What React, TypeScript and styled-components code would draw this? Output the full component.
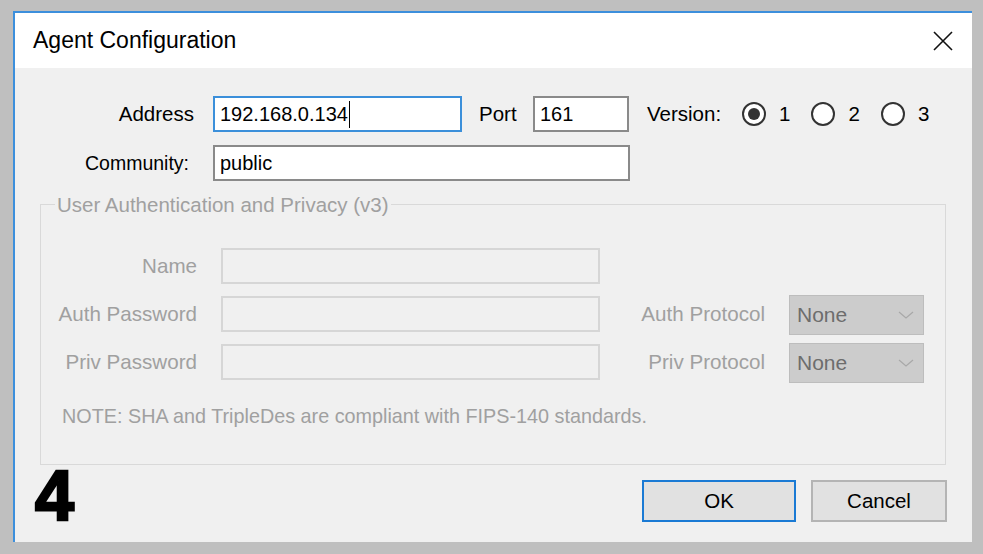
import React from 'react';
import styled, { createGlobalStyle } from 'styled-components';

const GlobalStyle = createGlobalStyle`
  html, body {
    margin: 0;
    padding: 0;
    background: #bfbfbf;
  }
  body {
    font-family: 'Liberation Sans', Arial, sans-serif;
  }
`;

const Screen = styled.div`
  width: 983px;
  height: 554px;
  box-sizing: border-box;
  padding: 11px 11px 14px 13px;
  background: #bfbfbf;
`;

const Window = styled.div`
  height: 100%;
  display: flex;
  flex-direction: column;
  border-top: 2px solid #3c8fdc;
  border-left: 2px solid #3c8fdc;
  background: #f0f0f0;
`;

const TitleBar = styled.div`
  height: 55px;
  flex: none;
  background: #ffffff;
  display: flex;
  align-items: center;
  justify-content: space-between;
  padding: 0 19px 0 18px;
  font-size: 23px;
  color: #000;
`;

const Body = styled.div`
  flex: 1;
  display: flex;
  flex-direction: column;
  padding-top: 28px;
  font-size: 20.5px;
  color: #000;
`;

const Row = styled.div`
  display: flex;
  align-items: center;
  height: 36px;
  & + & {
    margin-top: 13px;
  }
`;

const Label = styled.span<{ $width: number; $pad?: number; $align?: string; $size?: number }>`
  box-sizing: border-box;
  width: ${(p) => p.$width}px;
  flex: none;
  padding-right: ${(p) => (p.$align === 'left' ? 0 : p.$pad || 0)}px;
  padding-left: ${(p) => (p.$align === 'left' ? p.$pad || 0 : 0)}px;
  text-align: ${(p) => p.$align || 'right'};
  font-size: ${(p) => p.$size || 20.5}px;
  white-space: nowrap;
`;

const TextBox = styled.div<{ $width?: number; $focused?: boolean; $disabled?: boolean; $gap?: number }>`
  box-sizing: border-box;
  width: ${(p) => (p.$width ? `${p.$width}px` : 'auto')};
  height: 36px;
  margin-left: ${(p) => p.$gap || 0}px;
  display: flex;
  align-items: center;
  padding: 0 5px;
  background: ${(p) => (p.$disabled ? '#f0f0f0' : '#ffffff')};
  border: ${(p) =>
    p.$disabled
      ? '2px solid #d6d6d6'
      : p.$focused
      ? '2px solid #3b8fda'
      : '2px solid #8a8a8a'};
  font-size: 20px;
`;

const Caret = styled.span`
  display: inline-block;
  width: 1px;
  height: 27px;
  margin-left: 1px;
  background: #000;
`;

const VersionLabel = styled.span`
  margin-left: 18px;
  margin-right: 21px;
`;

const RadioGroup = styled.div`
  display: flex;
  align-items: center;
  gap: 21px;
`;

const RadioOption = styled.label`
  display: flex;
  align-items: center;
  gap: 13px;
`;

const RadioDot = styled.span<{ $checked?: boolean }>`
  position: relative;
  box-sizing: border-box;
  width: 24px;
  height: 24px;
  border: 2px solid #333333;
  border-radius: 50%;
  background: #ffffff;
  &::after {
    content: '';
    display: ${(p) => (p.$checked ? 'block' : 'none')};
    position: absolute;
    left: 4px;
    top: 4px;
    width: 12px;
    height: 12px;
    border-radius: 50%;
    background: #333333;
  }
`;

const Group = styled.fieldset`
  box-sizing: border-box;
  width: 906px;
  margin: 12px 0 0 25px;
  padding: 32px 0 36px 0;
  border: 1px solid #d9d9d9;
  min-width: 0;
`;

const GroupTitle = styled.legend`
  margin-left: 14px;
  padding: 0 2px;
  font-size: 20.5px;
  line-height: 23px;
  color: #a0a0a0;
`;

const Grid = styled.div`
  display: grid;
  grid-template-columns: 156px 379px 141px 135px;
  grid-auto-rows: 36px;
  column-gap: 24px;
  row-gap: 12px;
  align-items: center;
`;

const GridLabel = styled.span`
  text-align: right;
  color: #a0a0a0;
  white-space: nowrap;
  font-size: 20.6px;
`;

const Select = styled.div`
  box-sizing: border-box;
  height: 40px;
  margin: -1px 0 -3px;
  display: flex;
  align-items: center;
  justify-content: space-between;
  padding: 0 9px 0 7px;
  background: #cccccc;
  border: 1px solid #bdbdbd;
  color: #6d6d6d;
  font-size: 21px;
`;

const Note = styled.div`
  margin: 25px 0 0 21px;
  line-height: 23px;
  font-size: 19.8px;
  color: #a0a0a0;
`;

const Footer = styled.div`
  display: flex;
  align-items: flex-start;
  padding: 0 25px 0 18px;
`;

const StepNumber = styled.span`
  margin: 5px 0 0 2px;
  font-size: 70px;
  line-height: 52px;
  font-weight: 700;
  color: #000;
  -webkit-text-stroke: 2.5px #000;
`;

const Buttons = styled.div`
  margin: 15px 0 0 auto;
  display: flex;
  gap: 15px;
`;

const Button = styled.button<{ $width: number; $primary?: boolean }>`
  box-sizing: border-box;
  width: ${(p) => p.$width}px;
  height: 42px;
  background: #e1e1e1;
  border: ${(p) => (p.$primary ? '2px solid #1a7ad4' : '2px solid #b4b4b4')};
  font-family: 'Liberation Sans', Arial, sans-serif;
  font-size: 20.5px;
  color: #000;
  padding: 0;
`;

const CloseIcon = () => (
  <svg width="20" height="20" viewBox="0 0 20 20">
    <path d="M1 1 L19 19 M19 1 L1 19" stroke="#111" strokeWidth="1.6" fill="none" />
  </svg>
);

const Chevron = () => (
  <svg width="16" height="10" viewBox="0 0 16 10">
    <polyline points="1,2 8,8 15,2" stroke="#a8a8a8" strokeWidth="1.2" fill="none" />
  </svg>
);

const versions = ['1', '2', '3'];

export default function App() {
  return (
    <>
      <GlobalStyle />
      <Screen>
        <Window>
          <TitleBar>
            <span>Agent Configuration</span>
            <CloseIcon />
          </TitleBar>
          <Body>
            <Row>
              <Label $width={179}>Address</Label>
              <TextBox $width={249} $gap={19} $focused>
                192.168.0.134
                <Caret />
              </TextBox>
              <Label $width={71} $pad={17} $align="left">
                Port
              </Label>
              <TextBox $width={96}>161</TextBox>
              <VersionLabel>Version:</VersionLabel>
              <RadioGroup>
                {versions.map((v) => (
                  <RadioOption key={v}>
                    <RadioDot $checked={v === '1'} />
                    {v}
                  </RadioOption>
                ))}
              </RadioGroup>
            </Row>
            <Row>
              <Label $width={179} $pad={5} $size={19.5}>
                Community:
              </Label>
              <TextBox $width={417} $gap={19}>
                public
              </TextBox>
            </Row>

            <Group>
              <GroupTitle>User Authentication and Privacy (v3)</GroupTitle>
              <Grid>
                <GridLabel>Name</GridLabel>
                <TextBox $disabled />
                <span />
                <span />
                <GridLabel>Auth Password</GridLabel>
                <TextBox $disabled />
                <GridLabel>Auth Protocol</GridLabel>
                <Select>
                  None
                  <Chevron />
                </Select>
                <GridLabel>Priv Password</GridLabel>
                <TextBox $disabled />
                <GridLabel>Priv Protocol</GridLabel>
                <Select>
                  None
                  <Chevron />
                </Select>
              </Grid>
              <Note>NOTE: SHA and TripleDes are compliant with FIPS-140 standards.</Note>
            </Group>

            <Footer>
              <StepNumber>4</StepNumber>
              <Buttons>
                <Button $width={154} $primary>
                  OK
                </Button>
                <Button $width={136}>Cancel</Button>
              </Buttons>
            </Footer>
          </Body>
        </Window>
      </Screen>
    </>
  );
}
